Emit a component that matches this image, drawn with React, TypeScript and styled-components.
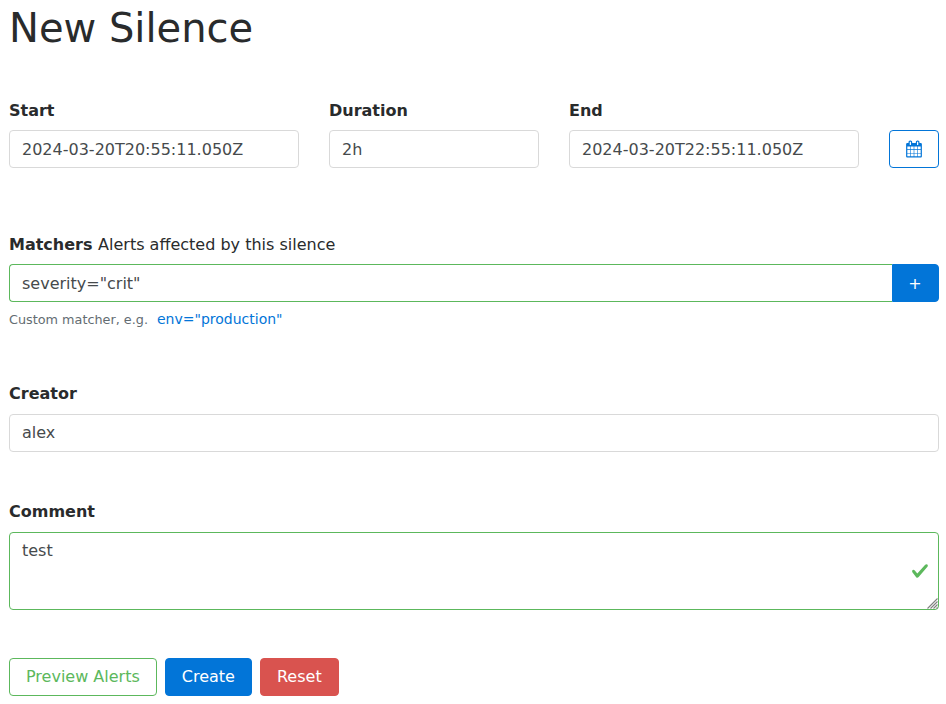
import React from "react";
import styled, { createGlobalStyle, css } from "styled-components";

const colors = {
  text: "#292b2c",
  input: "#464a4c",
  muted: "#636c72",
  border: "#d9d9d9",
  primary: "#0275d8",
  success: "#5cb85c",
  danger: "#d9534f",
};

const GlobalStyle = createGlobalStyle`
  *, *::before, *::after { box-sizing: border-box; }
  body {
    margin: 0;
    background: #fff;
    color: ${colors.text};
    font-family: "DejaVu Sans", sans-serif;
    font-size: 16px;
    line-height: 1.5;
    overflow: hidden;
  }
`;

const Page = styled.form`
  width: 930px;
  margin-left: 9px;
  padding-top: 6px;
`;

const Title = styled.h1`
  margin: 0 0 49px;
  font-size: 40px;
  font-weight: 400;
  line-height: 44px;
`;

const Section = styled.section<{ $gap: number }>`
  margin-bottom: ${(p) => p.$gap}px;
`;

const TimeRow = styled.div`
  display: grid;
  grid-template-columns: 290px 210px 290px 50px;
  column-gap: 30px;
  align-items: end;
  margin-bottom: 65px;
`;

const Label = styled.label<{ $space?: number }>`
  display: block;
  height: 24px;
  margin-bottom: ${(p) => p.$space ?? 7}px;
`;

const LabelNote = styled.span`
  margin-left: 0.5px;
`;

type Tone = "plain" | "success";

const control = css<{ $tone?: Tone }>`
  display: block;
  width: 100%;
  margin: 0;
  padding: 8px 12px;
  border: 1px solid ${(p) => (p.$tone === "success" ? colors.success : colors.border)};
  border-radius: 4px;
  outline: 0;
  background: #fff;
  color: ${colors.input};
  font: inherit;
  line-height: 20px;
`;

const Input = styled.input<{ $tone?: Tone; $raised?: boolean }>`
  ${control}
  height: 38px;
  ${(p) => p.$raised && "padding: 7px 12px 9px;"}
`;

const TextArea = styled.textarea<{ $tone?: Tone }>`
  ${control}
  height: 78px;
  padding-right: 36px;
  resize: none;
`;

const InputGroup = styled.div`
  display: flex;

  ${Input} {
    flex: 1;
    border-right: 0;
    border-radius: 4px 0 0 4px;
  }
`;

const TextAreaWrap = styled.div`
  position: relative;
`;

const CheckMark = styled.svg`
  position: absolute;
  top: 30px;
  right: 10px;
  width: 18px;
  height: 18px;
  pointer-events: none;
`;

const Grip = styled.svg`
  position: absolute;
  right: 1px;
  bottom: 1px;
  width: 11px;
  height: 11px;
  pointer-events: none;
`;

const Button = styled.button<{ $fill?: string; $outline?: string }>`
  display: inline-flex;
  align-items: center;
  justify-content: center;
  height: 38px;
  margin: 0;
  padding: 0 16px;
  border: 1px solid ${(p) => p.$outline ?? p.$fill};
  border-radius: 4px;
  background: ${(p) => p.$fill ?? "#fff"};
  color: ${(p) => p.$outline ?? "#fff"};
  font: inherit;
  line-height: 20px;
  white-space: nowrap;
`;

const IconButton = styled(Button)`
  padding: 0;
`;

const AddButton = styled(Button)`
  width: 47px;
  padding: 2px 16px 0 15px;
  border-radius: 0 4px 4px 0;
`;

const CalendarGlyph = styled.svg`
  flex: none;
  width: 18px;
  height: 18px;
`;

const Help = styled.div`
  display: flex;
  align-items: baseline;
  gap: 9px;
  height: 24px;
  margin-top: 5px;
  color: ${colors.muted};
  font-size: 12.8px;
  line-height: 24px;
`;

const Example = styled.a`
  color: ${colors.primary};
  font-size: 14px;
`;

const Actions = styled.div`
  display: flex;
  gap: 8px;
`;

const CalendarIcon = () => (
  <CalendarGlyph viewBox="-53 -53 1898 1898" fill="currentColor" aria-hidden="true">
    <path d="M192 1664h288v-288h-288v288zm352 0h320v-288h-320v288zm-352-352h288v-320h-288v320zm352 0h320v-320h-320v320zm-352-384h288v-288h-288v288zm736 736h320v-288h-320v288zm-384-736h320v-288h-320v288zm768 736h288v-288h-288v288zm-384-352h320v-320h-320v320zm-352-864v-288q0-13-9.500-22.500t-22.500-9.500h-64q-13 0-22.500 9.500t-9.500 22.500v288q0 13 9.500 22.500t22.500 9.500h64q13 0 22.500-9.500t9.500-22.500zm736 864h288v-320h-288v320zm-384-384h320v-288h-320v288zm384 0h288v-288h-288v288zm32-480v-288q0-13-9.500-22.500t-22.500-9.500h-64q-13 0-22.500 9.500t-9.500 22.500v288q0 13 9.500 22.500t22.500 9.500h64q13 0 22.500-9.500t9.500-22.500zm384-64v1280q0 52-38 90t-90 38h-1408q-52 0-90-38t-38-90v-1280q0-52 38-90t90-38h128v-96q0-66 47-113t113-47h64q66 0 113 47t47 113v96h384v-96q0-66 47-113t113-47h64q66 0 113 47t47 113v96h128q52 0 90 38t38 90z" />
  </CalendarGlyph>
);

export default function App() {
  return (
    <>
      <GlobalStyle />
      <Page onSubmit={(e) => e.preventDefault()}>
        <Title>New Silence</Title>
        <TimeRow>
          <div>
            <Label htmlFor="start"><strong>Start</strong></Label>
            <Input id="start" defaultValue="2024-03-20T20:55:11.050Z" />
          </div>
          <div>
            <Label htmlFor="duration"><strong>Duration</strong></Label>
            <Input id="duration" defaultValue="2h" />
          </div>
          <div>
            <Label htmlFor="end"><strong>End</strong></Label>
            <Input id="end" defaultValue="2024-03-20T22:55:11.050Z" />
          </div>
          <IconButton type="button" $outline={colors.primary} aria-label="Pick dates">
            <CalendarIcon />
          </IconButton>
        </TimeRow>
        <Section $gap={51}>
          <Label htmlFor="matcher"><strong>Matchers</strong> <LabelNote>Alerts affected by this silence</LabelNote></Label>
          <InputGroup>
            <Input id="matcher" $tone="success" defaultValue={'severity="crit"'} spellCheck={false} />
            <AddButton type="button" $fill={colors.primary}>+</AddButton>
          </InputGroup>
          <Help>
            <span>Custom matcher, e.g.</span>
            <Example>{'env="production"'}</Example>
          </Help>
        </Section>
        <Section $gap={48}>
          <Label htmlFor="creator" $space={8}><strong>Creator</strong></Label>
          <Input id="creator" $raised defaultValue="alex" />
        </Section>
        <Section $gap={48}>
          <Label htmlFor="comment" $space={8}><strong>Comment</strong></Label>
          <TextAreaWrap>
            <TextArea id="comment" $tone="success" defaultValue="test" spellCheck={false} />
            <CheckMark viewBox="0 0 8 8" aria-hidden="true">
              <path
                fill={colors.success}
                d="M2.3 6.73L.6 4.53c-.4-1.04.46-1.4 1.1-.8l1.1 1.4 3.4-3.8c.6-.63 1.6-.27 1.2.7l-4 4.6c-.43.5-.8.4-1.1.1z"
              />
            </CheckMark>
            <Grip viewBox="0 0 11 11" fill="none" stroke="#808080" strokeWidth="1.1" aria-hidden="true">
              <path d="M0.500 10.500L10.500 0.500M3.500 10.500L10.500 3.500M6.500 10.500L10.500 6.500M9.500 10.500L10.500 9.500" />
            </Grip>
          </TextAreaWrap>
        </Section>
        <Actions>
          <Button type="button" $outline={colors.success}>Preview Alerts</Button>
          <Button type="submit" $fill={colors.primary}>Create</Button>
          <Button type="reset" $fill={colors.danger}>Reset</Button>
        </Actions>
      </Page>
    </>
  );
}
